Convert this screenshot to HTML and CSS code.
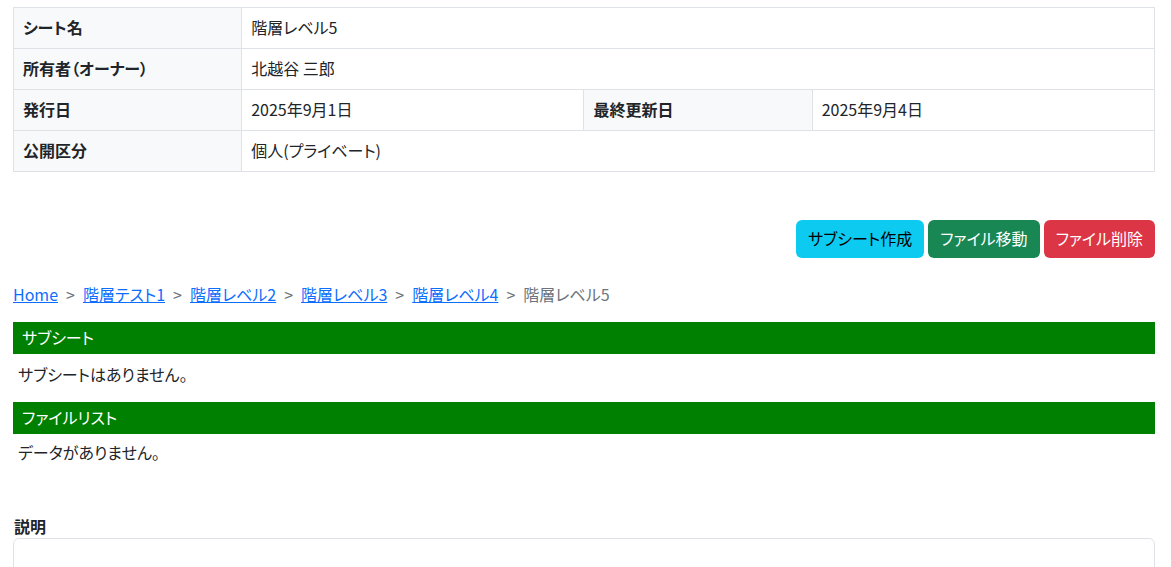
FILE: index.html
```html
<!DOCTYPE html>
<html lang="ja">
<head>
<meta charset="utf-8">
<title>階層レベル5</title>
<link rel="stylesheet" href="styles.css">
</head>
<body>
<div class="page">
  <table class="info">
    <colgroup><col class="c1"><col class="c2"><col class="c3"><col class="c4"></colgroup>
    <tr><th>シート名</th><td colspan="3">階層レベル5</td></tr>
    <tr><th>所有者（オーナー）</th><td colspan="3">北越谷 三郎</td></tr>
    <tr><th>発行日</th><td>2025年9月1日</td><th>最終更新日</th><td>2025年9月4日</td></tr>
    <tr><th>公開区分</th><td colspan="3">個人(プライベート)</td></tr>
  </table>

  <div class="actions">
    <button class="btn btn-info">サブシート作成</button>
    <button class="btn btn-success">ファイル移動</button>
    <button class="btn btn-danger">ファイル削除</button>
  </div>

  <nav class="crumbs">
    <a href="#">Home</a><span class="sep">&gt;</span>
    <a href="#">階層テスト1</a><span class="sep">&gt;</span>
    <a href="#">階層レベル2</a><span class="sep">&gt;</span>
    <a href="#">階層レベル3</a><span class="sep">&gt;</span>
    <a href="#">階層レベル4</a><span class="sep">&gt;</span>
    <span class="current">階層レベル5</span>
  </nav>

  <section class="block">
    <div class="bar">サブシート</div>
    <p class="empty">サブシートはありません。</p>
  </section>

  <section class="block">
    <div class="bar">ファイルリスト</div>
    <p class="empty second">データがありません。</p>
  </section>

  <div class="desc">
    <label class="desc-label">説明</label>
    <div class="desc-box"></div>
  </div>
</div>
</body>
</html>
```

FILE: styles.css
```css
* { box-sizing: border-box; }
html, body { margin: 0; padding: 0; background: #fff; }
body {
  font-family: "Noto Sans CJK JP", "Noto Sans", sans-serif;
  font-feature-settings: "palt";
  font-size: 16px;
  color: #212529;
  line-height: 1.5;
}
.page { padding: 7px 16px 0 13px; }

.info {
  width: 100%;
  border-collapse: collapse;
  table-layout: fixed;
}
.info .c1, .info .c3 { width: 20%; }
.info .c2, .info .c4 { width: 30%; }
.info th, .info td {
  border: 1px solid #dee2e6;
  padding: 7px 9px 9px;
  height: 41px;
  text-align: left;
  vertical-align: middle;
  font-size: 16px;
  line-height: 24px;
}
.info th { background: #f8f9fa; font-weight: 700; }
.info td { font-weight: 400; }

.actions {
  display: flex;
  justify-content: flex-end;
  gap: 4px;
  margin-top: 48px;
}
.btn {
  font-family: inherit;
  font-feature-settings: "palt";
  font-size: 16px;
  line-height: 24px;
  padding: 5px 11px 7px;
  border: 1px solid transparent;
  border-radius: 6px;
  height: 38px;
}
.btn-info { background: #0dcaf0; color: #000; }
.btn-success { background: #198754; color: #fff; }
.btn-danger { background: #dc3545; color: #fff; }

.crumbs {
  margin-top: 24px;
  display: flex;
  align-items: center;
  font-size: 16px;
  line-height: 24px;
}
.crumbs a { color: #0d6efd; text-decoration: underline; }
.crumbs .sep { color: #6c757d; padding: 0 8px; }
.crumbs .current { color: #6c757d; }

.block { margin-top: 16px; }
.block + .block { margin-top: 0; }
.bar {
  background: #008000;
  color: #fff;
  height: 32px;
  line-height: 31px;
  padding-left: 9px;
  font-size: 16px;
  font-weight: 400;
}
.empty {
  margin: 0;
  height: 48px;
  padding: 8px 5px 0;
  font-size: 16px;
  line-height: 24px;
}
.empty.second { padding-top: 6px; }

.desc { margin-top: 32px; }
.desc-label {
  display: block;
  font-size: 16px;
  font-weight: 700;
  line-height: 24px;
  padding-left: 1px;
}
.desc-box {
  height: 80px;
  border: 1px solid #dee2e6;
  border-radius: 6px;
}
```
